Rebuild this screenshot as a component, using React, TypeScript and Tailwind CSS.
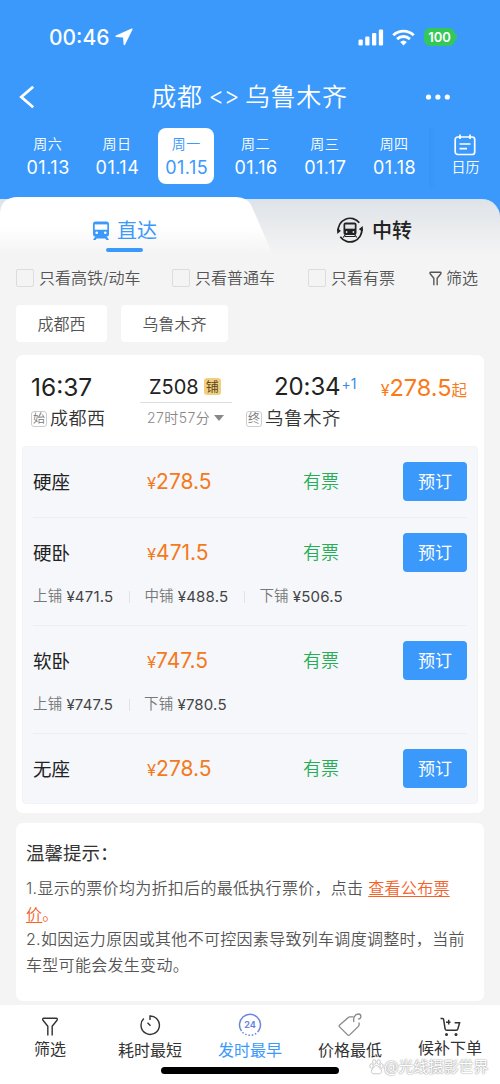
import type { ReactNode } from 'react'

interface Day {
  week: string
  date: string
  active?: boolean
}

interface Seat {
  name: string
  price: string
  berths?: { label: string; price: string }[]
}

const days: Day[] = [
  { week: '周六', date: '01.13' },
  { week: '周日', date: '01.14' },
  { week: '周一', date: '01.15', active: true },
  { week: '周二', date: '01.16' },
  { week: '周三', date: '01.17' },
  { week: '周四', date: '01.18' },
]

const seats: Seat[] = [
  { name: '硬座', price: '278.5' },
  {
    name: '硬卧',
    price: '471.5',
    berths: [
      { label: '上铺', price: '471.5' },
      { label: '中铺', price: '488.5' },
      { label: '下铺', price: '506.5' },
    ],
  },
  {
    name: '软卧',
    price: '747.5',
    berths: [
      { label: '上铺', price: '747.5' },
      { label: '下铺', price: '780.5' },
    ],
  },
  { name: '无座', price: '278.5' },
]

function StatusBar() {
  return (
    <div className="flex h-[74px] items-center pr-[43px] pl-[49px]">
      <span className="text-[21px] leading-none font-medium">00:46</span>
      <svg className="ml-[5px]" width="18" height="18" viewBox="0 0 18 18" fill="currentColor">
        <path d="M16.6.6.9 7.500c-.8.4-.7 1.400.2 1.500l7 .4.5 7c.1.9 1.200 1 1.600.2L17.500 1.600c.3-.7-.2-1.300-.9-1z" />
      </svg>
      <svg className="ml-auto" width="26" height="17" viewBox="0 0 26 17" fill="currentColor">
        <rect x="0.500" y="10.500" width="4.300" height="6" rx="1.200" />
        <rect x="7.200" y="7.500" width="4.300" height="9" rx="1.200" />
        <rect x="14" y="4" width="4.300" height="12.500" rx="1.200" />
        <rect x="20.800" y="0.500" width="4.300" height="16" rx="1.200" />
      </svg>
      <svg className="ml-[8px]" width="23" height="17" viewBox="0 0 23 17" fill="none" stroke="currentColor" strokeWidth="2.900">
        <path d="M1.300 6.300a14.500 14.500 0 0 1 20.400 0" />
        <path d="M5.100 10.100a9.200 9.200 0 0 1 12.800 0" />
        <path d="M8.200 13a4.800 4.800 0 0 1 6.600 0l-3.300 3.400z" fill="currentColor" stroke="none" />
      </svg>
      <div className="ml-[9px] flex items-center">
        <span className="flex h-[18px] w-[31px] items-center justify-center rounded-[6px] bg-[#34c759] text-[13px] leading-none font-semibold">
          100
        </span>
        <span className="h-[6px] w-[2px] rounded-r-full bg-[#34c759]" />
      </div>
    </div>
  )
}

function NavBar() {
  return (
    <div className="flex h-[46px] items-center justify-between pr-[49px] pl-[18px]">
      <svg width="18" height="24" viewBox="0 0 18 24" fill="none" stroke="currentColor" strokeWidth="2.800">
        <path d="M15.200 1.800 3.300 12l11.900 10.200" />
      </svg>
      <h1 className="ml-[38px] flex items-center text-[25px] leading-none font-[350] tracking-[0.700px]">
        成都
        <span className="mx-[6px] text-[24px] font-light tracking-[-0.500px]">&lt;&gt;</span>
        乌鲁木齐
      </h1>
      <svg width="26" height="6" viewBox="0 0 26 6" fill="currentColor">
        <circle cx="3.500" cy="3" r="2.600" />
        <circle cx="12.900" cy="3" r="2.600" />
        <circle cx="22.300" cy="3" r="2.600" />
      </svg>
    </div>
  )
}

function DateStrip() {
  return (
    <div className="flex h-[77px] items-start pt-[8px] pl-[13px]">
      {days.map((d) => (
        <div key={d.date} className="flex w-[69.300px] shrink-0 justify-center">
          <div
            className={`flex h-[56px] w-[56px] flex-col items-center rounded-[8px] pt-[7px] ${
              d.active ? 'bg-white text-[#3b99fc]' : ''
            }`}
          >
            <span className="text-[14px] leading-[17px] font-[350] tracking-[0.500px]">{d.week}</span>
            <span className="mt-[5px] pl-px text-[18px] leading-[22px] tracking-[0.500px]">{d.date}</span>
          </div>
        </div>
      ))}
      <div className="flex h-[60px] flex-1 flex-col items-center bg-linear-to-r from-[#3895f7] to-[#3b99fc] to-10% pt-[6px] pl-[2px]">
        <svg width="22" height="22" viewBox="0 0 22 22" fill="none" stroke="currentColor" strokeWidth="1.700">
          <rect x="1.200" y="3" width="19.500" height="17.500" rx="2.500" />
          <path d="M6 .5v4.500M16 .5v4.500M5.500 10h11M5.500 14.700h7.500" />
        </svg>
        <span className="mt-px text-[14px] leading-[20px] font-[350]">日历</span>
      </div>
    </div>
  )
}

function TrainIcon() {
  return (
    <svg width="18" height="20" viewBox="0 0 18 20" fill="currentColor">
      <path d="M3.500.5h11a2.500 2.500 0 0 1 2.500 2.500v10.500a2 2 0 0 1-2 2H3a2 2 0 0 1-2-2V3A2.500 2.500 0 0 1 3.500.5z" />
      <path d="M3.500 15 1 19h2.600l1-1.500h8.800l1 1.500H17l-2.500-4z" />
      <rect x="2.700" y="3.400" width="12.600" height="5.300" fill="#fff" />
      <circle cx="4.700" cy="11.800" r="1.300" fill="#fff" />
      <circle cx="13.300" cy="11.800" r="1.300" fill="#fff" />
    </svg>
  )
}

function TransferIcon() {
  return (
    <svg width="28" height="28" viewBox="0 0 28 28" fill="none" stroke="currentColor" strokeWidth="1.700">
      <path d="M2.300 15.500A11.800 11.800 0 0 1 23.300 6.800M25.700 12.500A11.800 11.800 0 0 1 4.300 20.800" />
      <path d="m1 12.500.3 5.500 3.700-3.200zM27 15.500l-.3-5.500-3.900 3.200z" fill="currentColor" stroke="none" />
      <rect x="7.500" y="6.500" width="13" height="12.500" rx="2" fill="currentColor" stroke="none" />
      <path d="M9.200 8.500h9.600v4.200H9.200z" fill="#e3e6e9" stroke="none" />
      <path d="m9.500 18.500-2.300 3M18.500 18.500l2.300 3M9 20.500h10" strokeWidth="1.200" />
      <circle cx="10.600" cy="16" r=".9" fill="#e3e6e9" stroke="none" />
      <circle cx="17.400" cy="16" r=".9" fill="#e3e6e9" stroke="none" />
    </svg>
  )
}

function RouteTabs() {
  return (
    <div className="grid h-[58px] grid-cols-1 bg-[#3b99fc]">
      <div className="col-start-1 row-start-1 mt-[2px] flex items-center rounded-tr-[18px] border-t border-[#cfe5fb] bg-linear-to-b from-[#dfe3e8] to-[#f4f4f4] pt-[5px] pl-[336px] text-[#222]">
        <TransferIcon />
        <span className="mt-px ml-[8px] text-[20px] leading-none font-medium">中转</span>
      </div>
      <div className="col-start-1 row-start-1 flex h-[58px] w-[274px] flex-col items-center bg-linear-to-b from-white from-50% to-[#f4f4f4] pr-[25px] text-[#3b99fc] [clip-path:path('M0_18Q0_0_18_0H236Q248_0_252_10L273_58H0Z')]">
        <div className="mt-[19px] flex h-[29px] items-center">
          <TrainIcon />
          <span className="ml-[7px] text-[20px] leading-none">直达</span>
        </div>
        <span className="mt-[3px] h-[4px] w-[37px] rounded-full bg-[#3b99fc]" />
      </div>
    </div>
  )
}

function Check({ children, className }: { children: ReactNode; className: string }) {
  return (
    <label className={`flex items-center ${className}`}>
      <span className="h-[18px] w-[18px] rounded-[2px] border-[1.500px] border-[#dcdcdc]" />
      <span className="ml-[5px]">{children}</span>
    </label>
  )
}

function FunnelIcon({ className }: { className: string }) {
  return (
    <svg className={className} viewBox="0 0 18 20" fill="none" stroke="currentColor" strokeLinejoin="round">
      <path d="M6.700 19.500V9.700L1.600 3.400C1 2.400 1.300 1.300 2.400 1.300h13.200c1.100 0 1.400 1.100.8 2.100l-5.100 6.300v9.800" />
    </svg>
  )
}

function Filters() {
  return (
    <div className="px-[16px] text-[#555]">
      <div className="flex h-[46px] items-center text-[16px] leading-none font-[350] whitespace-nowrap">
        <Check className="w-[156px]">只看高铁/动车</Check>
        <Check className="w-[136px]">只看普通车</Check>
        <Check className="w-[121px]">只看有票</Check>
        <FunnelIcon className="h-[15px] w-[13px] stroke-[1.900]" />
        <span className="ml-[4px]">筛选</span>
      </div>
      <div className="mt-[4px] flex gap-[14px] text-[16px] leading-[24px] font-[350]">
        <span className="flex h-[37px] w-[91px] items-center justify-center rounded-[4px] bg-white">成都西</span>
        <span className="flex h-[37px] w-[107px] items-center justify-center rounded-[4px] bg-white">乌鲁木齐</span>
      </div>
    </div>
  )
}

function StationTag({ children }: { children: string }) {
  return (
    <span className="mr-[3px] flex h-[16px] w-[16px] items-center justify-center rounded-[3px] border border-[#ccc] text-[12px] leading-none tracking-normal text-[#777]">
      {children}
    </span>
  )
}

function TrainSummary() {
  return (
    <div className="flex h-[91px] pt-[16px] pr-[17px] pl-[15px]">
      <div className="w-[94px]">
        <div className="h-[32px] text-[24.500px] leading-[32px] text-[#222]">16:37</div>
        <div className="flex h-[31px] items-center text-[18px] leading-none font-[350] tracking-[0.500px] whitespace-nowrap text-[#333]">
          <StationTag>始</StationTag>
          成都西
        </div>
      </div>
      <div className="ml-[15px] w-[92px]">
        <div className="flex h-[31px] items-center pl-[9px] text-[20px] leading-none text-[#222]">
          Z508
          <span className="ml-[5px] flex h-[17px] w-[17px] items-center justify-center rounded-[3px] bg-[#f0cf83] text-[13px] text-[#5f4718]">
            铺
          </span>
        </div>
        <div className="h-px w-full bg-[#ddd]" />
        <div className="flex h-[30px] items-center pl-[7px] text-[14px] leading-none font-[350] tracking-[0.450px] whitespace-nowrap text-[#888]">
          27时57分
          <span className="ml-[4px] border-x-[5px] border-t-[6px] border-x-transparent border-t-[#888]" />
        </div>
      </div>
      <div className="ml-[14px] w-[120px]">
        <div className="flex h-[32px] pl-[28px] text-[24px] leading-[32px] tracking-[-0.100px] text-[#222]">
          20:34
          <span className="-mt-[3px] ml-px text-[14px] leading-[32px] text-[#3b8ae8]">+1</span>
        </div>
        <div className="flex h-[31px] items-center text-[18.500px] leading-none font-[350] tracking-[0.500px] whitespace-nowrap text-[#333]">
          <StationTag>终</StationTag>
          乌鲁木齐
        </div>
      </div>
      <div className="ml-auto flex h-[34px] items-baseline text-[15.500px] leading-[34px] text-[#fa7a18]">
        <span className="text-[16px]">¥</span>
        <span className="text-[23.500px]">278.5</span>起
      </div>
    </div>
  )
}

function SeatRow({ seat }: { seat: Seat }) {
  return (
    <li className="border-b border-[#ebeef2] pt-[15px] pb-[16px] last:border-b-0">
      <div className="flex h-[39px] items-center leading-none">
        <span className="mt-px w-[114px] text-[18.500px] text-[#222]">{seat.name}</span>
        <span className="mt-px w-[156px] text-[16.500px] leading-[20px] text-[#f47a20]">
          ¥<span className="text-[21px]">{seat.price}</span>
        </span>
        <span className="mt-px text-[18px] font-[350] text-[#27ae55]">有票</span>
        <button className="ml-auto h-[39px] w-[64px] rounded-[4px] bg-[#3b99fc] pt-px text-[17px] text-white">预订</button>
      </div>
      {seat.berths && (
        <div className="mt-[13px] mb-px flex h-[23px] items-center text-[15px] leading-none tracking-[0.200px]">
          {seat.berths.map((b, i) => (
            <div key={b.label} className="flex items-center">
              {i > 0 && <span className="mr-[14px] ml-[16px] h-[12px] w-px bg-[#dfe2e6]" />}
              <span className="text-[14.500px] font-[350] text-[#777]">{b.label}</span>
              <span className="ml-[4px] text-[#444]">¥{b.price}</span>
            </div>
          ))}
        </div>
      )}
    </li>
  )
}

function Tips() {
  return (
    <section className="mx-[16px] mt-[10px] h-[178px] rounded-[7px] bg-white pt-[15px] pl-[10px]">
      <h2 className="text-[18.500px] leading-[30px] text-[#333]">温馨提示：</h2>
      <div className="mt-[8px] text-[16px] leading-[25.500px] font-[350] tracking-[0.300px] whitespace-nowrap text-[#555]">
        <p>
          1.显示的票价均为折扣后的最低执行票价，点击{' '}
          <a className="text-[#f4622a] underline underline-offset-2">查看公布票</a>
          <br />
          <span className="text-[#f4622a]">
            <a className="underline underline-offset-2">价</a>。
          </span>
        </p>
        <p>
          2.如因运力原因或其他不可控因素导致列车调度调整时，当前
          <br />
          车型可能会发生变动。
        </p>
      </div>
    </section>
  )
}

function BottomTab({ label, className = '', children }: { label: string; className?: string; children: ReactNode }) {
  return (
    <div className={`flex w-[100px] flex-col items-center ${className}`}>
      <div className="flex h-[24px] items-center">{children}</div>
      <span className="text-[16px] leading-[16px] whitespace-nowrap">{label}</span>
    </div>
  )
}

function BottomBar() {
  return (
    <footer className="relative mt-[4px] h-[79px] bg-white text-[#333]">
      <div className="flex">
        <BottomTab label="筛选" className="gap-[3px] pt-[9px]">
          <FunnelIcon className="h-[19px] w-[18px] stroke-[1.500]" />
        </BottomTab>
        <BottomTab label="耗时最短" className="gap-[5px] pt-[8px]">
          <svg width="22" height="22" viewBox="0 0 22 22" fill="none" stroke="currentColor" strokeWidth="1.400">
            <path d="M11 6V2a9.200 9.200 0 1 1-6.200 2.600M8.500 8.800l3 3" />
          </svg>
        </BottomTab>
        <BottomTab label="发时最早" className="gap-[5px] pt-[8px] text-[#3b99fc]">
          <svg width="24" height="24" viewBox="0 0 24 24" fill="none" stroke="#6a86dc" strokeWidth="1.500">
            <path d="M3.500 18A10.500 10.500 0 1 1 20.500 18" />
            <path d="M20.500 18A10.500 10.500 0 0 1 3.500 18" strokeDasharray="1.500 1.800" />
            <text x="12" y="15.200" textAnchor="middle" fill="#6a86dc" stroke="none" className="text-[9px] font-bold">
              24
            </text>
          </svg>
        </BottomTab>
        <BottomTab label="价格最低" className="gap-[5px] pt-[8px]">
          <svg width="25" height="24" viewBox="0 0 25 24" fill="none" stroke="#888" strokeWidth="1.300" strokeLinejoin="round">
            <path d="M15.500 3.800h-3.700c-.6 0-1 .2-1.500.6L1.700 11.900c-.8.7-.8 1.300-.1 2l8 8c.7.7 1.400.7 2.100 0l8.700-8.500c.5-.5.7-1 .7-1.600V9.500" />
            <path d="M16 9c-1.200-3.800.8-8 4.400-8 3.200 0 3.500 5-.2 5" />
          </svg>
        </BottomTab>
        <BottomTab label="候补下单" className="gap-[3px] pt-[8px]">
          <svg className="mt-[3px]" width="21" height="20" viewBox="0 0 21 20" fill="none" stroke="currentColor" strokeWidth="1.500">
            <path d="M.5 1.500h2.200c.6 0 .8.300.9.900l1.500 9.400c.2 1 .8 1.500 1.700 1.500h9.400c.9 0 1.500-.5 1.700-1.400l1.700-6.200h-5M6 5.200h4.500M8.700 2.800v4.800" />
            <circle cx="6.500" cy="17.500" r="1.500" fill="currentColor" stroke="none" />
            <circle cx="16" cy="17.500" r="1.500" fill="currentColor" stroke="none" />
          </svg>
        </BottomTab>
      </div>
      <div className="absolute top-[62px] left-[161px] h-[7px] w-[178px] rounded-full bg-black" />
      <div className="absolute top-[54px] left-[369px] flex items-center text-white [text-shadow:0_0_1px_#999,0_0_2px_#999]">
        <svg width="15" height="16" viewBox="0 0 15 16" fill="#fff" stroke="#bbb" strokeWidth=".8">
          <ellipse cx="2.500" cy="7" rx="1.700" ry="2.300" />
          <ellipse cx="5.300" cy="3" rx="1.700" ry="2.300" />
          <ellipse cx="9.700" cy="3" rx="1.700" ry="2.300" />
          <ellipse cx="12.500" cy="7" rx="1.700" ry="2.300" />
          <path d="M7.500 6.500c2 0 2.500 2 4 3.500 2.500 2.500.5 5-1.500 4.800-1.500-.1-3.500-.1-5 0-2 .2-4-2.300-1.500-4.800 1.500-1.500 2-3.500 4-3.500z" />
        </svg>
        <span className="text-[15px] leading-[16px] whitespace-nowrap">@光线摄影世界</span>
      </div>
    </footer>
  )
}

export default function App() {
  return (
    <div className="h-[1084px] w-[500px] overflow-hidden bg-[#f4f4f4] font-[Inter,'Noto_Sans_CJK_SC',sans-serif]">
      <header className="bg-[#3b99fc] text-white">
        <StatusBar />
        <NavBar />
        <DateStrip />
      </header>
      <RouteTabs />
      <Filters />
      <section className="mx-[16px] mt-[13px] h-[458px] rounded-[7px] bg-white">
        <TrainSummary />
        <ul className="mx-[6px] h-[358px] rounded-[4px] border border-[#f1f3f6] bg-[#f5f7fb] px-[10px]">
          {seats.map((s) => (
            <SeatRow key={s.name} seat={s} />
          ))}
        </ul>
      </section>
      <Tips />
      <BottomBar />
    </div>
  )
}
